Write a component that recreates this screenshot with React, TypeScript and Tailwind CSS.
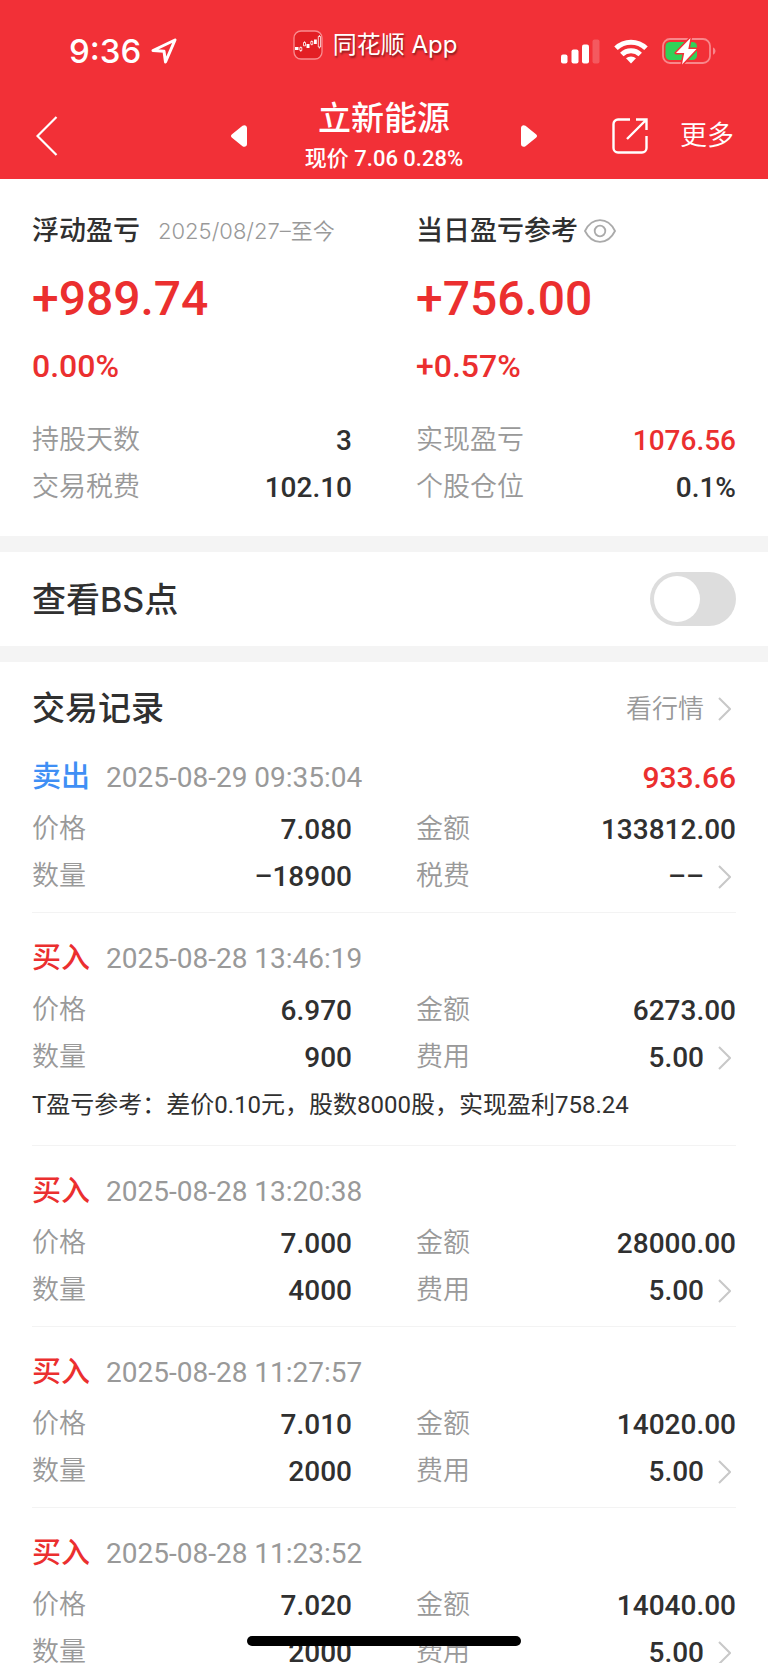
import { useState } from "react";

type TradeRecord = {
  side: "buy" | "sell";
  time: string;
  price: string;
  amount: string;
  quantity: string;
  fee: string;
  profit?: string;
  note?: string;
};

const records: TradeRecord[] = [
  {
    side: "sell",
    time: "2025-08-29 09:35:04",
    price: "7.080",
    amount: "133812.00",
    quantity: "–18900",
    fee: "––",
    profit: "933.66",
  },
  {
    side: "buy",
    time: "2025-08-28 13:46:19",
    price: "6.970",
    amount: "6273.00",
    quantity: "900",
    fee: "5.00",
    note: "T盈亏参考：差价0.10元，股数8000股，实现盈利758.24",
  },
  {
    side: "buy",
    time: "2025-08-28 13:20:38",
    price: "7.000",
    amount: "28000.00",
    quantity: "4000",
    fee: "5.00",
  },
  {
    side: "buy",
    time: "2025-08-28 11:27:57",
    price: "7.010",
    amount: "14020.00",
    quantity: "2000",
    fee: "5.00",
  },
  {
    side: "buy",
    time: "2025-08-28 11:23:52",
    price: "7.020",
    amount: "14040.00",
    quantity: "2000",
    fee: "5.00",
  },
];

function ChevronRight() {
  return (
    <svg
      className="ml-[14px] mr-[5px] h-6 w-[13px] shrink-0"
      viewBox="0 0 13 24"
      fill="none"
      stroke="#c8c8c8"
      strokeWidth="2"
      aria-hidden="true"
    >
      <path d="M1 1l11 11L1 23" />
    </svg>
  );
}

function StatusBar() {
  return (
    <div className="grid h-[90px] grid-cols-[1fr_auto_1fr] items-center pr-[18px]">
      <div className="flex items-center gap-[10px] pl-[69px] pt-3">
        <span className="font-['Inter',sans-serif] text-[33px] font-medium leading-none">
          9:36
        </span>
        <svg
          className="h-[26px] w-[26px]"
          viewBox="0 0 26 26"
          fill="none"
          stroke="currentColor"
          strokeWidth="3"
          strokeLinejoin="round"
          aria-hidden="true"
        >
          <path d="M24 2L2 12.500l11 .8L14.500 24z" />
        </svg>
      </div>
      <div className="flex items-center gap-[10px]">
        <svg className="h-[30px] w-[30px]" viewBox="0 0 30 30" aria-hidden="true">
          <rect
            x="1"
            y="1"
            width="28"
            height="28"
            rx="7"
            fill="#e31f24"
            stroke="#f98d90"
            strokeWidth="1.300"
          />
          <g fill="#fff">
            <rect x="2" y="17" width="3.500" height="3" />
            <rect x="13.500" y="14" width="3" height="4" />
            <rect x="21" y="9.500" width="2.800" height="4.500" />
          </g>
          <g fill="none" stroke="#fff" strokeWidth=".8">
            <path d="M6.800 17.500h2v3h-2zM7.800 16.500v1M7.800 20.500v1.300" />
            <path d="M10.500 12.500h2v3.300h-2zM11.500 11.300v1.200" />
            <path d="M17.800 11.500h2v2.800h-2zM18.800 10.500v1M18.800 14.300v1" />
            <path d="M25.300 6.500h2.300v10.500h-2.300zM26.400 5v1.500M26.400 17v1.500" />
          </g>
        </svg>
        <span className="font-['Inter','Noto_Sans_CJK_SC',sans-serif] text-2xl leading-8 [text-shadow:1px_2px_2px_rgba(0,0,0,0.45)]">
          同花顺 App
        </span>
      </div>
      <div className="mr-[34px] flex items-center justify-end gap-[14px] pt-3">
        <svg
          className="h-[25px] w-[39px]"
          viewBox="0 0 39 25"
          fill="currentColor"
          aria-hidden="true"
        >
          <rect x="0" y="15.500" width="6.500" height="9" rx="2" />
          <rect x="10.500" y="10.500" width="7" height="14" rx="2" />
          <rect x="21" y="5.500" width="7" height="19" rx="2" />
          <rect x="31.500" y="0.500" width="7" height="24" rx="2" opacity=".2" />
        </svg>
        <svg
          className="h-[25px] w-[34px]"
          viewBox="0 0 34 25"
          fill="none"
          stroke="currentColor"
          strokeWidth="5"
          aria-hidden="true"
        >
          <path d="M2 9.300a21.500 21.500 0 0 1 30 0" />
          <path d="M7.800 15.500a13.300 13.300 0 0 1 18.400 0" />
          <path
            d="M17 24.500l-5-5.200a7.600 7.600 0 0 1 10 0z"
            fill="currentColor"
            stroke="none"
          />
        </svg>
        <svg className="h-[28px] w-[54px]" viewBox="0 0 54 28" aria-hidden="true">
          <rect
            x="1"
            y="2"
            width="47"
            height="24"
            rx="7"
            fill="none"
            stroke="#f8878b"
            strokeWidth="1.800"
          />
          <path d="M51 10.500c3.300 1.200 3.300 6 0 7.200z" fill="#f8878b" />
          <rect x="3.500" y="5" width="31.500" height="18" rx="4.500" fill="#30d158" />
          <path
            d="M28.500 1L14 16h8.200L20 27.500 34.500 12h-8.200z"
            fill="#fff"
            stroke="#f23037"
            strokeWidth="3"
            strokeLinejoin="round"
            paintOrder="stroke"
          />
        </svg>
      </div>
    </div>
  );
}

function NavBar() {
  return (
    <nav className="grid h-[89px] grid-cols-[1fr_auto_1fr] items-center">
      <button type="button" aria-label="返回" className="ml-9 mt-0.5 w-fit">
        <svg
          className="h-10 w-[22px]"
          viewBox="0 0 22 40"
          fill="none"
          stroke="currentColor"
          strokeWidth="2.200"
          aria-hidden="true"
        >
          <path d="M20.500 1L1.500 20l19 19" />
        </svg>
      </button>
      <div className="flex w-[307px] items-center justify-between">
        <button type="button" aria-label="上一只" className="mt-0.5">
          <svg
            className="h-[22px] w-4"
            viewBox="0 0 16 22"
            fill="currentColor"
            aria-hidden="true"
          >
            <path d="M1 9.300L11.500.8C13.500-.6 16 .5 16 3v16c0 2.500-2.500 3.600-4.500 2.200L1 12.700a2.200 2.200 0 0 1 0-3.400z" />
          </svg>
        </button>
        <div className="flex flex-col items-center pt-1">
          <h1 className="text-[33px] font-medium leading-[44px]">立新能源</h1>
          <p className="text-[22px] font-medium leading-9">现价 7.06 0.28%</p>
        </div>
        <button type="button" aria-label="下一只" className="mt-0.5">
          <svg
            className="h-[22px] w-4"
            viewBox="0 0 16 22"
            fill="currentColor"
            aria-hidden="true"
          >
            <path d="M15 9.300L4.500.8C2.500-.6 0 .5 0 3v16c0 2.500 2.500 3.600 4.500 2.200L15 12.700a2.200 2.200 0 0 0 0-3.400z" />
          </svg>
        </button>
      </div>
      <div className="mt-0.5 flex items-center justify-end gap-8 pr-[34px]">
        <button type="button" aria-label="分享">
          <svg
            className="h-9 w-9"
            viewBox="0 0 36 36"
            fill="none"
            stroke="currentColor"
            strokeWidth="2.400"
            aria-hidden="true"
          >
            <path d="M18 1.500H6A4.500 4.500 0 0 0 1.500 6v24A4.500 4.500 0 0 0 6 34.500h24a4.500 4.500 0 0 0 4.500-4.500V18" />
            <path d="M24 1.500h10.500V12M34.500 1.500L15 21" />
          </svg>
        </button>
        <button type="button" className="text-[27px] font-[350] leading-10">
          更多
        </button>
      </div>
    </nav>
  );
}

function Field({
  label,
  value,
  red = false,
  more = false,
}: {
  label: string;
  value: string;
  red?: boolean;
  more?: boolean;
}) {
  return (
    <div className="flex h-[47px] items-center">
      <dt className="mr-auto text-[27px] font-[350] text-[#999]">{label}</dt>
      <dd
        className={`text-[28px] font-medium ${red ? "text-[#eb2f2f]" : "text-[#303030]"}`}
      >
        {value}
      </dd>
      {more && <ChevronRight />}
    </div>
  );
}

function Summary() {
  return (
    <section className="grid grid-cols-2 gap-x-16 px-8 pb-[25px] pt-8">
      <div>
        <div className="flex h-10 items-center gap-[18px] whitespace-nowrap">
          <h2 className="text-[27px] font-medium">浮动盈亏</h2>
          <span className="font-['Inter','Noto_Sans_CJK_SC',sans-serif] text-[22px] font-[350] text-[#999]">
            2025/08/27–至今
          </span>
        </div>
        <p className="text-5xl/24 font-medium text-[#eb2f2f]">+989.74</p>
        <p className="text-[32px] font-medium leading-[38px] text-[#eb2f2f]">
          0.00%
        </p>
        <dl className="mt-8">
          <Field label="持股天数" value="3" />
          <Field label="交易税费" value="102.10" />
        </dl>
      </div>
      <div>
        <div className="flex h-10 items-center gap-[6px] whitespace-nowrap">
          <h2 className="text-[27px] font-medium">当日盈亏参考</h2>
          <button type="button" aria-label="隐藏金额">
            <svg
              className="h-6 w-8"
              viewBox="0 0 32 24"
              fill="none"
              stroke="#aaa"
              strokeWidth="1.800"
              aria-hidden="true"
            >
              <path d="M1 12C4.500 5 10 1.200 16 1.200S27.500 5 31 12c-3.500 7-9 10.800-15 10.800S4.500 19 1 12z" />
              <circle cx="16" cy="12" r="5.300" />
            </svg>
          </button>
        </div>
        <p className="text-5xl/24 font-medium text-[#eb2f2f]">+756.00</p>
        <p className="text-[32px] font-medium leading-[38px] text-[#eb2f2f]">
          +0.57%
        </p>
        <dl className="mt-8">
          <Field label="实现盈亏" value="1076.56" red />
          <Field label="个股仓位" value="0.1%" />
        </dl>
      </div>
    </section>
  );
}

function BsToggle() {
  const [checked, setChecked] = useState(false);

  return (
    <section className="flex h-[126px] items-center justify-between border-y-[16px] border-[#f4f4f4] px-8">
      <label
        htmlFor="bs-points"
        className="font-['Inter','Noto_Sans_CJK_SC',sans-serif] text-[34px] font-medium"
      >
        查看BS点
      </label>
      <input
        id="bs-points"
        type="checkbox"
        role="switch"
        checked={checked}
        onChange={(e) => setChecked(e.target.checked)}
        className="flex h-[54px] w-[86px] appearance-none items-center rounded-full bg-[#ddd] px-1 before:h-[46px] before:w-[46px] before:rounded-full before:bg-white checked:justify-end checked:bg-[#eb2f2f]"
      />
    </section>
  );
}

function TradeItem({ record }: { record: TradeRecord }) {
  const sell = record.side === "sell";

  return (
    <li
      className={`border-b border-[#f3f3f3] pt-[22px] ${record.note ? "pb-4" : "pb-3"}`}
    >
      <div className="mb-[5px] flex h-[47px] items-center">
        <span
          className={`text-[29px] font-medium ${sell ? "text-[#3f8ff5]" : "text-[#eb2f2f]"}`}
        >
          {sell ? "卖出" : "买入"}
        </span>
        <time className="ml-4 text-[28px] text-[#999]">{record.time}</time>
        {record.profit && (
          <span className="ml-auto text-[30px] font-medium text-[#eb2f2f]">
            {record.profit}
          </span>
        )}
      </div>
      <dl className="grid grid-cols-2 gap-x-16">
        <Field label="价格" value={record.price} />
        <Field label="金额" value={record.amount} />
        <Field label="数量" value={record.quantity} />
        <Field label={sell ? "税费" : "费用"} value={record.fee} more />
      </dl>
      {record.note && (
        <p className="text-2xl leading-[48px]">{record.note}</p>
      )}
    </li>
  );
}

export default function App() {
  return (
    <div className="relative h-screen overflow-hidden bg-white font-['Roboto','Noto_Sans_CJK_SC',sans-serif] text-[#303030]">
      <header className="bg-[#f23037] text-white">
        <StatusBar />
        <NavBar />
      </header>
      <main>
        <Summary />
        <BsToggle />
        <section className="px-8 pt-6">
          <div className="flex h-[46px] items-center justify-between">
            <h2 className="text-[33px] font-medium">交易记录</h2>
            <a
              href="#quote"
              className="flex items-center text-[26px] font-[350] text-[#999]"
            >
              看行情
              <ChevronRight />
            </a>
          </div>
          <ul>
            {records.map((record) => (
              <TradeItem key={record.time} record={record} />
            ))}
          </ul>
        </section>
      </main>
      <div className="absolute inset-x-0 bottom-[17px] flex justify-center">
        <div className="h-[10px] w-[274px] rounded-full bg-black" />
      </div>
    </div>
  );
}
